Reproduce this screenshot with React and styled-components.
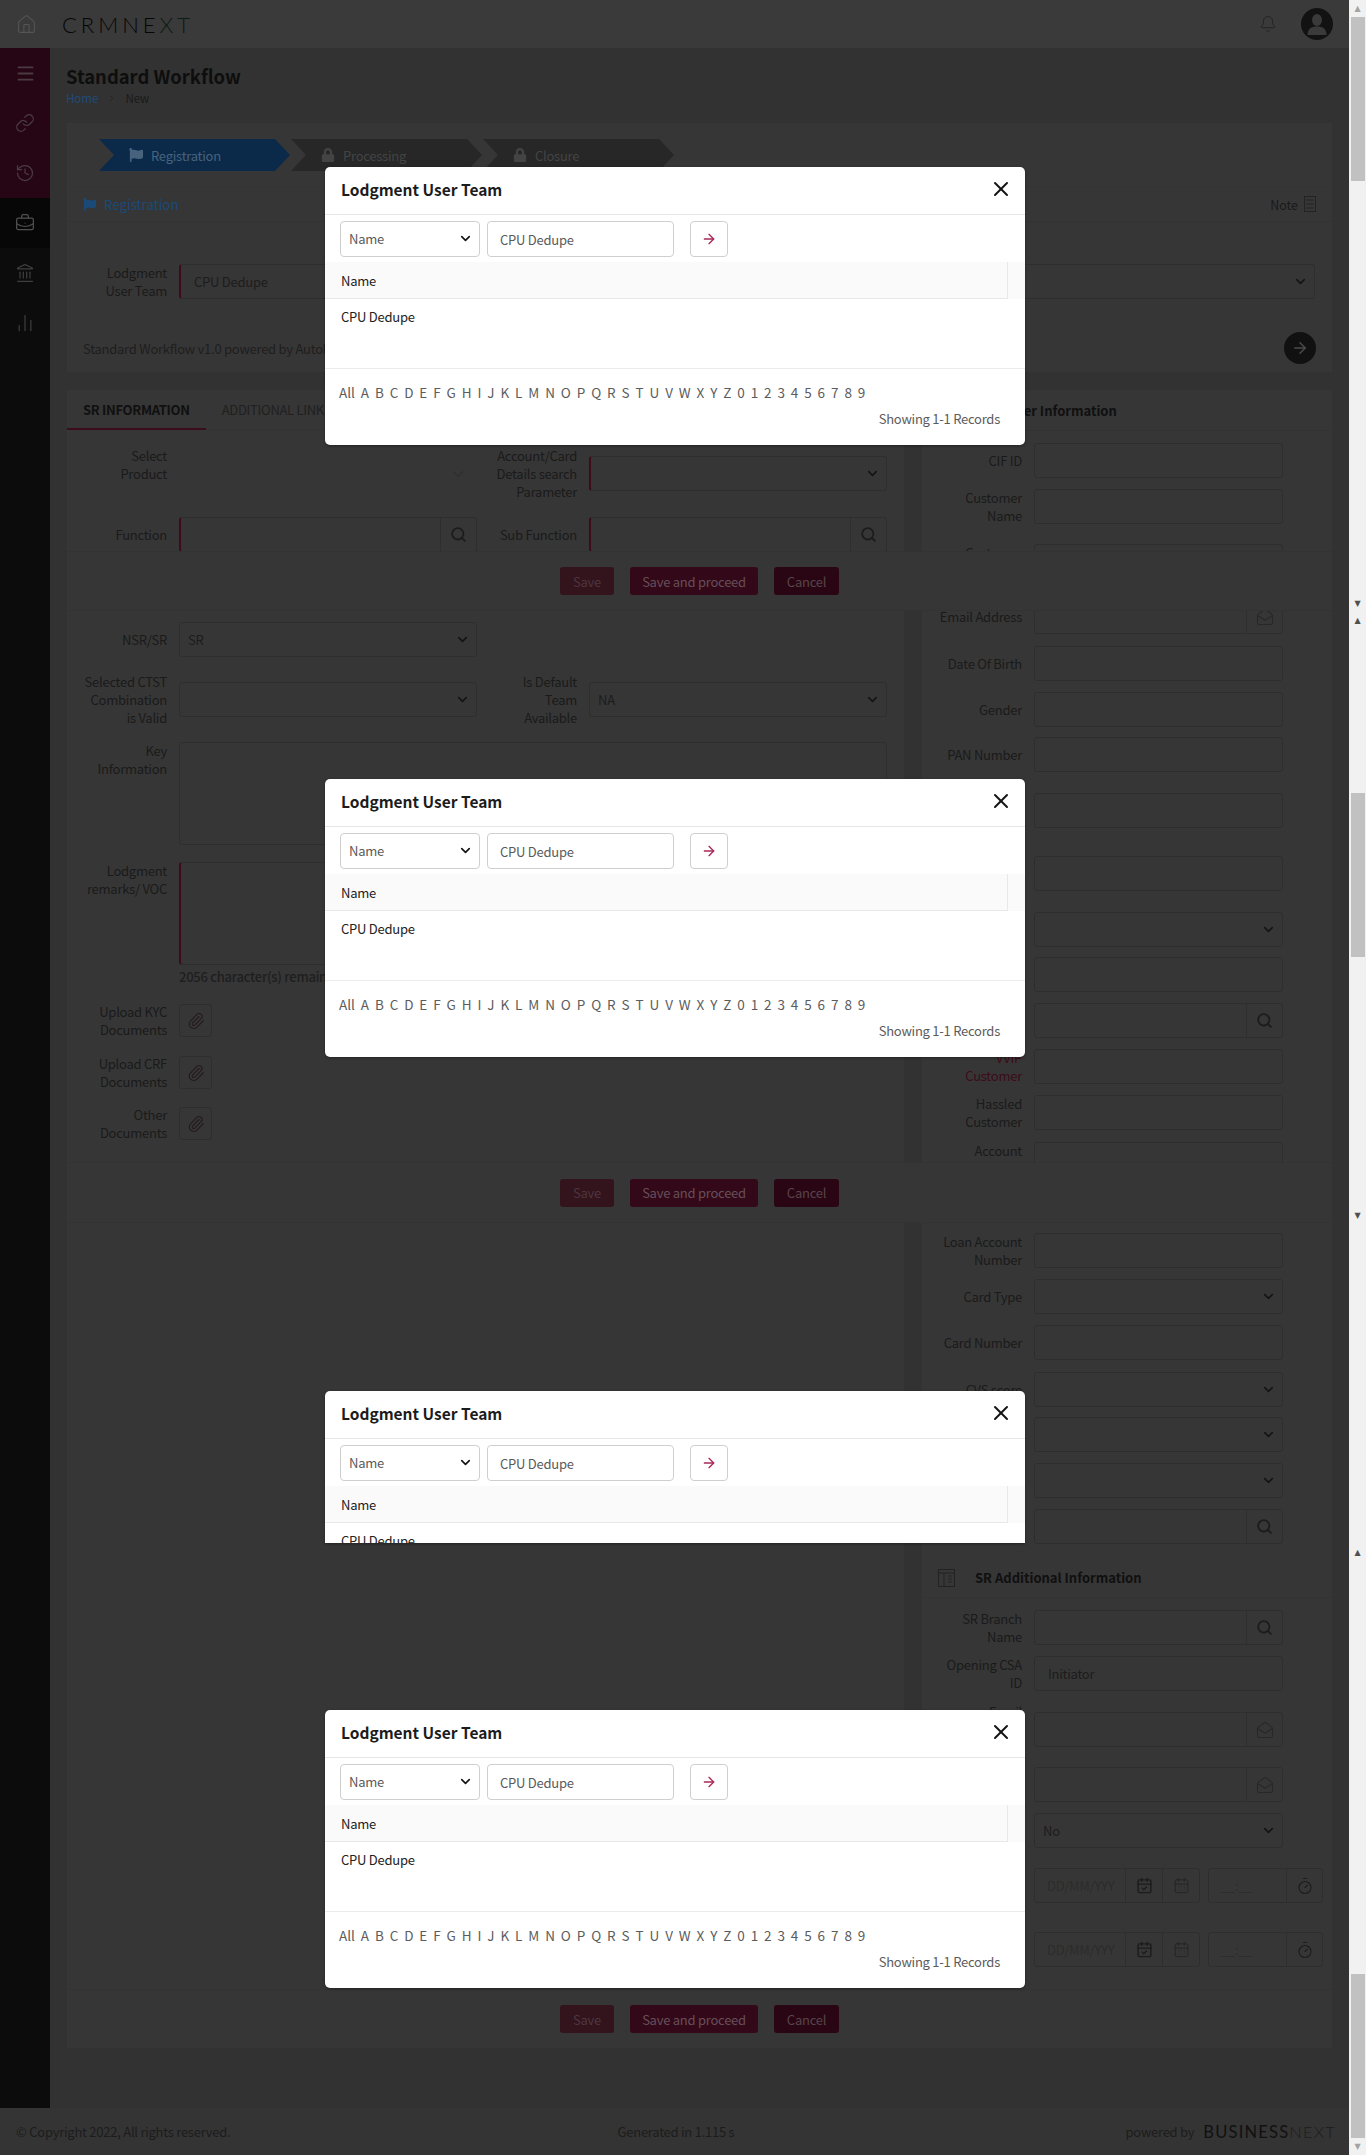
import React from 'react';
import styled, { createGlobalStyle } from 'styled-components';
import {
  House, Bell, Menu, Link, History, BriefcaseBusiness, Landmark, ChartNoAxesColumn,
  ChevronDown, ChevronRight, ArrowRight, X, Search, Paperclip, MailOpen, CalendarDays,
  CalendarCheck, Timer,
} from 'lucide-react';
import { FaFlag, FaLock } from 'react-icons/fa';

const FONT = '"Noto Sans CJK SC", "Noto Sans", sans-serif';

const GlobalStyle = createGlobalStyle`
  html, body { margin: 0; padding: 0; background: #323232; }
  * { box-sizing: border-box; }
  body { font-family: ${FONT}; font-size: 13px; letter-spacing: -0.25px; }
`;

const Shell = styled.div`
  position: relative;
  width: 1366px;
  height: 2155px;
  overflow: hidden;
  display: flex;
`;

const Page = styled.div`
  width: 1349px;
  display: flex;
  flex-direction: column;
  background: #323232;
`;

const TopBar = styled.header`
  height: 48px;
  display: flex;
  align-items: center;
  background: #3a3a3a;
  padding: 0 16px 0 16px;
  color: #1d1d1d;
`;

const Logo = styled.div`
  font-family: Lato, sans-serif;
  font-weight: 300;
  font-size: 22px;
  letter-spacing: 4px;
  margin-left: 25px;
  color: #060606;
  span { color: #0c1c12; }
`;

const TopRight = styled.div`
  margin-left: auto;
  display: flex;
  align-items: center;
  gap: 24px;
`;

const Body = styled.div`
  flex: 1;
  display: flex;
  min-height: 0;
`;

const Sidebar = styled.nav`
  width: 50px;
  background: #0c0c0c;
`;

const SideItem = styled.div`
  height: 50px;
  display: flex;
  align-items: center;
  justify-content: center;
  color: ${p => (p.$tone === 'crimson' ? '#4a3a41' : '#3e3e3e')};
  background: ${p => (p.$tone === 'crimson' ? '#260614' : p.$tone === 'active' ? '#070707' : 'transparent')};
`;

const Content = styled.main`
  flex: 1;
  padding: 0 17px;
  display: flex;
  flex-direction: column;
`;

const PageHead = styled.div`
  height: 75px;
  padding: 16px 0 0 0;
  margin-left: -1px;
`;

const PageTitle = styled.h1`
  margin: 0;
  font-size: 18.4px;
  line-height: 24px;
  font-weight: 600;
  letter-spacing: 0;
  color: #0e0e0e;
`;

const Crumbs = styled.div`
  margin-top: 2px;
  font-size: 11.5px;
  letter-spacing: 0;
  line-height: 16px;
  display: flex;
  align-items: center;
  gap: 8px;
  color: #1a1a1a;
  a { color: #1f4a78; }
`;

const TopCard = styled.section`
  background: #363636;
  height: 249px;
  margin-bottom: 18px;
`;

const Stepper = styled.div`
  height: 63px;
  padding: 16px 32px;
  display: flex;
  gap: 1px;
`;

const Step = styled.div`
  width: 191px;
  height: 32px;
  padding-left: 30px;
  display: flex;
  align-items: center;
  gap: 8px;
  clip-path: polygon(0 0, calc(100% - 15px) 0, 100% 50%, calc(100% - 15px) 100%, 0 100%, 15px 50%);
  background: ${p => (p.$active ? '#0b2a4a' : '#272727')};
  color: ${p => (p.$active ? '#47627d' : '#444')};
`;

const SubHead = styled.div`
  height: 36px;
  padding: 0 16px;
  display: flex;
  align-items: center;
  gap: 8px;
  border-top: 1px solid #343434;
  border-bottom: 1px solid #333;
  color: #1a4a78;
  font-size: 13.3px;
  letter-spacing: 0;
`;

const NoteLink = styled.div`
  margin-left: auto;
  display: flex;
  align-items: center;
  gap: 6px;
  color: #1a1a1a;
  font-size: 12.5px;
`;

const TeamRow = styled.div`
  margin-top: 42px;
  padding: 0 17px 0 16px;
`;

const PoweredRow = styled.div`
  margin-top: 33px;
  padding: 0 16px;
  height: 32px;
  display: flex;
  align-items: center;
  justify-content: space-between;
  color: #1e1e1e;
`;

const RoundNext = styled.div`
  width: 32px;
  height: 32px;
  border-radius: 50%;
  background: #111;
  color: #4b4b4b;
  display: flex;
  align-items: center;
  justify-content: center;
`;

const Slice = styled.div`
  height: ${p => p.$h}px;
  display: flex;
  gap: 18px;
  overflow: hidden;
`;

const LeftCol = styled.div`
  width: 837px;
  background: #363636;
`;

const RightCol = styled.div`
  width: 410px;
  padding: 0 9px 0 16px;
  background: #363636;
`;

const Tabs = styled.div`
  height: 40px;
  display: flex;
  border-bottom: 1px solid #333;
`;

const Tab = styled.div`
  padding: 0 16px;
  height: 40px;
  display: flex;
  align-items: center;
  font-weight: ${p => (p.$active ? 600 : 400)};
  letter-spacing: -0.3px;
  color: ${p => (p.$active ? '#101010' : '#202020')};
  border-bottom: 2px solid ${p => (p.$active ? '#3b0c1a' : 'transparent')};
`;

const FieldGrid = styled.div`
  display: grid;
  grid-template-columns: 1fr 1fr;
  column-gap: 16px;
  padding: 0 17px 0 16px;
  margin-top: ${p => p.$gap || 0}px;
`;

const Wide = styled.div`
  grid-column: 1 / 3;
`;

const FieldRow = styled.div`
  display: flex;
  gap: 12px;
  height: ${p => p.$h || 35}px;
  align-items: ${p => (p.$top ? 'flex-start' : 'center')};
  margin-top: ${p => p.$gap || 0}px;
  max-width: ${p => (p.$max ? `${p.$max}px` : 'none')};
`;

const FieldLabel = styled.div`
  width: 84px;
  flex-shrink: 0;
  text-align: right;
  line-height: 18px;
  margin-bottom: ${p => p.$lift || 0}px;
  color: ${p => (p.$red ? '#3e0b18' : '#1a1a1a')};
`;

const Control = styled.div`
  flex: 1;
  min-width: 0;
  height: 100%;
  display: flex;
  align-items: center;
  justify-content: ${p => (p.$plain ? 'flex-end' : 'flex-start')};
  border: ${p => (p.$plain ? 'none' : '1px solid #2e2e2e')};
  border-left: ${p => (p.$req ? '2px solid #3e0c18' : p.$plain ? 'none' : '1px solid #2e2e2e')};
  border-radius: 3px;
  color: #1c1c1c;
  padding-left: ${p => p.$pad || 8}px;
  padding-right: ${p => (p.$plain ? 9 : 0)}px;
`;

const Chevron = styled.span`
  margin-left: auto;
  width: 21px;
  display: flex;
  color: #141414;
`;

const Addon = styled.span`
  margin-left: auto;
  width: ${p => p.$w || 36}px;
  height: 100%;
  flex-shrink: 0;
  display: flex;
  align-items: center;
  justify-content: center;
  border-left: 1px solid #2e2e2e;
  color: ${p => p.$tone || '#1c1c1c'};
  & + & { margin-left: 0; }
`;

const Hint = styled.div`
  margin: 3px 0 0 96px;
  line-height: 18px;
  font-weight: 500;
  color: #1e1e1e;
`;

const AttachBtn = styled.div`
  width: 33px;
  height: 33px;
  border: 1px solid #2e2e2e;
  border-radius: 3px;
  display: flex;
  align-items: center;
  justify-content: center;
  color: #251a1e;
`;

const DatePair = styled.div`
  flex: 1;
  height: 100%;
  display: flex;
  gap: 8px;
`;

const DateBox = styled.div`
  width: ${p => p.$w}px;
  height: 100%;
  display: flex;
  align-items: center;
  border: 1px solid #2e2e2e;
  border-radius: 3px;
  padding-left: 12px;
  color: #2c2c2c;
`;

const ColHead = styled.div`
  height: ${p => p.$h}px;
  margin: ${p => p.$gap || 0}px -9px 0 -16px;
  padding-left: 16px;
  display: flex;
  align-items: center;
  gap: 20px;
  font-size: 13px;
  letter-spacing: 0;
  font-weight: 600;
  color: #101010;
  border-bottom: 1px solid #333;
`;

const ActionBar = styled.div`
  height: ${p => p.$h || 60}px;
  flex-shrink: 0;
  background: #363636;
  border-top: 1px solid #333;
  border-bottom: 1px solid #333;
  display: flex;
  align-items: center;
  justify-content: center;
  gap: 16px;
`;

const ActionBtn = styled.div`
  height: 28px;
  width: ${p => p.$w}px;
  border-radius: 3px;
  display: flex;
  align-items: center;
  justify-content: center;
  background: ${p => p.$bg};
  color: ${p => p.$fg};
`;

const PageFooter = styled.footer`
  height: 47px;
  padding: 0 13px 0 16px;
  background: #343434;
  display: grid;
  grid-template-columns: 1fr auto 1fr;
  align-items: center;
  color: #1c1c1c;
`;

const PoweredBy = styled.div`
  justify-self: end;
  display: flex;
  align-items: center;
  gap: 9px;
`;

const BrandMark = styled.span`
  font-family: Lato, sans-serif;
  font-size: 16.5px;
  letter-spacing: 1.2px;
  color: #111;
  font-weight: 400;
  span { color: #1c1c1c; font-weight: 300; }
`;

const Scrollbar = styled.aside`
  width: 17px;
  background: #f1f1f1;
  display: flex;
  flex-direction: column;
`;

const ScrollSeg = styled.div`
  height: ${p => p.$h}px;
  display: flex;
  flex-direction: column;
  align-items: center;
`;

const ScrollArrow = styled.div`
  height: 17px;
  flex-shrink: 0;
  margin-top: ${p => (p.$end ? 'auto' : 0)};
  color: ${p => (p.$dim ? '#a3a3a3' : '#505050')};
  font-size: 8px;
  line-height: 17px;
  font-family: "DejaVu Sans", sans-serif;
`;

const ScrollThumb = styled.div`
  width: 14px;
  height: ${p => p.$h}px;
  margin-top: ${p => p.$at}px;
  background: #c1c1c1;
`;

// the four popups of the stitched capture
const Modal = styled.div`
  position: absolute;
  left: 325px;
  top: ${p => p.$top}px;
  width: 700px;
  height: ${p => p.$h || 278}px;
  overflow: hidden;
  background: #fff;
  border-radius: ${p => (p.$clipped ? '5px 5px 0 0' : '5px')};
  box-shadow: 0 1px 3px rgba(0, 0, 0, 0.35);
`;

const ModalHead = styled.div`
  height: 48px;
  padding: 0 16px 3px;
  display: flex;
  align-items: center;
  justify-content: space-between;
  border-bottom: 1px solid #e6e6e6;
`;

const ModalTitle = styled.h2`
  margin: 0;
  font-size: 15.5px;
  line-height: 24px;
  font-weight: 600;
  letter-spacing: 0;
  color: #1c1c1c;
`;

const CloseBtn = styled.span`
  display: flex;
  color: #141414;
  margin-right: -4px;
`;

const FilterRow = styled.div`
  padding: 6px 0 5px 15px;
  display: flex;
`;

const FilterBox = styled.div`
  width: ${p => p.$w}px;
  height: 36px;
  margin-right: ${p => p.$mr || 0}px;
  border: 1px solid #cfcfcf;
  border-radius: 4px;
  padding-left: ${p => p.$pad || 0}px;
  padding-bottom: ${p => p.$lift || 0}px;
  display: flex;
  align-items: center;
  justify-content: ${p => (p.$center ? 'center' : 'flex-start')};
  color: #5a5a5a;
`;

const TableHead = styled.div`
  height: 37px;
  background: #fafafa;
`;

const HeadCell = styled.div`
  width: 683px;
  height: 37px;
  padding-left: 16px;
  display: flex;
  align-items: center;
  color: #222;
  border-right: 1px solid #e8e8e8;
  border-bottom: 1px solid #e8e8e8;
`;

const TableBody = styled.div`
  height: 70px;
  padding: 8px 16px;
  line-height: 20px;
  color: #222;
  border-bottom: 1px solid #ececec;
`;

const Alpha = styled.div`
  padding: 13px 0 0 14px;
  display: flex;
  gap: 5.9px;
  line-height: 20px;
  font-size: 13.5px;
  letter-spacing: 0;
  color: #5c5c5c;
`;

const Records = styled.div`
  margin-top: 7px;
  padding-right: 25px;
  text-align: right;
  line-height: 20px;
  color: #5c5c5c;
`;

const ALPHA = ['All', ...'ABCDEFGHIJKLMNOPQRSTUVWXYZ0123456789'];

function LookupModal({ top, height, clipped }) {
  return (
    <Modal $top={top} $h={height} $clipped={clipped}>
      <ModalHead>
        <ModalTitle>Lodgment User Team</ModalTitle>
        <CloseBtn><X size={24} strokeWidth={2} /></CloseBtn>
      </ModalHead>
      <FilterRow>
        <FilterBox $w={140} $mr={7} $pad={8} $lift={2}>
          Name
          <Chevron><ChevronDown size={15} strokeWidth={2.6} /></Chevron>
        </FilterBox>
        <FilterBox $w={187} $mr={16} $pad={12}>CPU Dedupe</FilterBox>
        <FilterBox $w={38} $center><ArrowRight size={16} color="#a8285a" /></FilterBox>
      </FilterRow>
      <TableHead><HeadCell>Name</HeadCell></TableHead>
      <TableBody>CPU Dedupe</TableBody>
      <Alpha>{ALPHA.map(c => <span key={c}>{c}</span>)}</Alpha>
      <Records>Showing 1-1 Records</Records>
    </Modal>
  );
}

function SelectControl({ value, req, pad }) {
  return (
    <Control $req={req} $pad={pad}>
      {value}
      <Chevron><ChevronDown size={15} strokeWidth={2.6} /></Chevron>
    </Control>
  );
}

function LookupControl({ req, icon }) {
  const Icon = icon || Search;
  return (
    <Control $req={req}>
      <Addon>
        {icon ? <Icon size={18} strokeWidth={1.4} color="#272727" /> : <Icon size={17} strokeWidth={2.6} />}
      </Addon>
    </Control>
  );
}

function Field({ label, gap, red, max, lift, children }) {
  return (
    <FieldRow $gap={gap} $max={max}>
      <FieldLabel $red={red} $lift={lift}>{label}</FieldLabel>
      {children}
    </FieldRow>
  );
}

function SideField({ label, gap, red, type }) {
  return (
    <Field label={label} gap={gap} red={red} max={345}>
      {type === 'select' && <SelectControl />}
      {type === 'search' && <LookupControl />}
      {type === 'mail' && <LookupControl icon={MailOpen} />}
      {!type && <Control />}
    </Field>
  );
}

function Actions({ h }) {
  return (
    <ActionBar $h={h}>
      <ActionBtn $w={54} $bg="#33131c" $fg="#4e363f">Save</ActionBtn>
      <ActionBtn $w={128} $bg="#330818" $fg="#664f58">Save and proceed</ActionBtn>
      <ActionBtn $w={65} $bg="#2a0614" $fg="#57444a">Cancel</ActionBtn>
    </ActionBar>
  );
}

function DateTimeField({ gap, label }) {
  return (
    <Field label={label} gap={gap}>
      <DatePair>
        <DateBox $w={166}>
          DD/MM/YYY
          <Addon $w={37}><CalendarCheck size={17} /></Addon>
          <Addon $w={37} $tone="#242424"><CalendarDays size={17} strokeWidth={1.3} /></Addon>
        </DateBox>
        <DateBox $w={115}>
          __:__
          <Addon $w={36}><Timer size={18} strokeWidth={1.5} /></Addon>
        </DateBox>
      </DatePair>
    </Field>
  );
}

function TableIcon() {
  return (
    <svg width="17" height="18" viewBox="0 0 17 18" fill="none" stroke="#222" strokeWidth="1">
      <rect x="0.5" y="0.5" width="16" height="17" />
      <path d="M0.5 4h16M6 4v13.500M10 7h4M10 10h4M10 13h4" />
    </svg>
  );
}

function NoteIcon() {
  return (
    <svg width="12" height="16" viewBox="0 0 12 16" fill="none" stroke="#232323" strokeWidth="1">
      <rect x="0.5" y="0.5" width="11" height="15" />
      <path d="M2.500 4h7M2.500 8h7M2.500 12h7" />
    </svg>
  );
}

function Avatar() {
  return (
    <svg width="32" height="32" viewBox="0 0 32 32">
      <circle cx="16" cy="16" r="16" fill="#121212" />
      <ellipse cx="16" cy="12" rx="5" ry="6" fill="#3a3a3a" />
      <path d="M6.500 27c0-6 3.500-8.500 9.500-8.500s9.500 2.500 9.500 8.500z" fill="#3a3a3a" />
    </svg>
  );
}

export default function App() {
  return (
    <Shell>
      <GlobalStyle />
      <Page>
        <TopBar>
          <House size={21} strokeWidth={1.2} color="#555" />
          <Logo>CRMNE<span>XT</span></Logo>
          <TopRight>
            <Bell size={18} strokeWidth={1.2} color="#202020" />
            <Avatar />
          </TopRight>
        </TopBar>
        <Body>
          <Sidebar>
            <SideItem $tone="crimson"><Menu size={21} strokeWidth={2.2} /></SideItem>
            <SideItem $tone="crimson"><Link size={20} strokeWidth={1.5} /></SideItem>
            <SideItem $tone="crimson"><History size={20} strokeWidth={1.5} /></SideItem>
            <SideItem $tone="active"><BriefcaseBusiness size={20} strokeWidth={1.5} color="#505050" /></SideItem>
            <SideItem><Landmark size={20} strokeWidth={1.5} /></SideItem>
            <SideItem><ChartNoAxesColumn size={20} strokeWidth={1.5} /></SideItem>
          </Sidebar>
          <Content>
            <PageHead>
              <PageTitle>Standard Workflow</PageTitle>
              <Crumbs><a>Home</a><ChevronRight size={11} color="#222" />New</Crumbs>
            </PageHead>

            <TopCard>
              <Stepper>
                <Step $active><FaFlag size={14} />Registration</Step>
                <Step><FaLock size={14} />Processing</Step>
                <Step><FaLock size={14} />Closure</Step>
              </Stepper>
              <SubHead>
                <FaFlag size={13} />Registration
                <NoteLink>Note <NoteIcon /></NoteLink>
              </SubHead>
              <TeamRow>
                <Field label="Lodgment User Team"><SelectControl value="CPU Dedupe" req pad={13} /></Field>
              </TeamRow>
              <PoweredRow>
                Standard Workflow v1.0 powered by AutoFlow
                <RoundNext><ArrowRight size={18} /></RoundNext>
              </PoweredRow>
            </TopCard>

            <Slice $h={161}>
              <LeftCol>
                <Tabs>
                  <Tab $active>SR INFORMATION</Tab>
                  <Tab>ADDITIONAL LINKS</Tab>
                </Tabs>
                <FieldGrid $gap={26}>
                  <Field label="Select Product" lift={17}>
                    <Control $plain><ChevronDown size={20} strokeWidth={0.8} color="#222" /></Control>
                  </Field>
                  <Field label="Account/Card Details search Parameter"><SelectControl req /></Field>
                </FieldGrid>
                <FieldGrid $gap={26}>
                  <Field label="Function"><LookupControl req /></Field>
                  <Field label="Sub Function"><LookupControl req /></Field>
                </FieldGrid>
              </LeftCol>
              <RightCol>
                <ColHead $h={41}><TableIcon />Customer Information</ColHead>
                <SideField label="CIF ID" gap={12} />
                <SideField label="Customer Name" gap={11} />
                <SideField label="Customer Type" gap={20} />
              </RightCol>
            </Slice>
            <Actions />

            <Slice $h={551}>
              <LeftCol>
                <FieldGrid $gap={11}>
                  <Field label="NSR/SR"><SelectControl value="SR" /></Field>
                </FieldGrid>
                <FieldGrid $gap={25}>
                  <Field label="Selected CTST Combination is Valid"><SelectControl /></Field>
                  <Field label="Is Default Team Available"><SelectControl value="NA" /></Field>
                </FieldGrid>
                <FieldGrid $gap={25}>
                  <Wide>
                    <FieldRow $h={103} $top>
                      <FieldLabel>Key Information</FieldLabel>
                      <Control />
                    </FieldRow>
                  </Wide>
                </FieldGrid>
                <FieldGrid $gap={17}>
                  <Wide>
                    <FieldRow $h={103} $top>
                      <FieldLabel>Lodgment remarks/ VOC</FieldLabel>
                      <Control $req />
                    </FieldRow>
                    <Hint>2056 character(s) remaining</Hint>
                  </Wide>
                </FieldGrid>
                <FieldGrid $gap={18}>
                  <FieldRow $h={33}>
                    <FieldLabel>Upload KYC Documents</FieldLabel>
                    <AttachBtn><Paperclip size={18} strokeWidth={1.5} /></AttachBtn>
                  </FieldRow>
                </FieldGrid>
                <FieldGrid $gap={19}>
                  <FieldRow $h={33}>
                    <FieldLabel>Upload CRF Documents</FieldLabel>
                    <AttachBtn><Paperclip size={18} strokeWidth={1.5} /></AttachBtn>
                  </FieldRow>
                </FieldGrid>
                <FieldGrid $gap={18}>
                  <FieldRow $h={33}>
                    <FieldLabel>Other Documents</FieldLabel>
                    <AttachBtn><Paperclip size={18} strokeWidth={1.5} /></AttachBtn>
                  </FieldRow>
                </FieldGrid>
              </LeftCol>
              <RightCol>
                <SideField label="Email Address" gap={-12} type="mail" />
                <SideField label="Date Of Birth" gap={12} />
                <SideField label="Gender" gap={11} />
                <SideField label="PAN Number" gap={10} />
                <SideField label="Mobile Number" gap={21} />
                <SideField label="Alternate Number" gap={28} />
                <SideField label="Segment" gap={21} type="select" />
                <SideField label="Relationship" gap={10} />
                <SideField label="Branch" gap={11} type="search" />
                <SideField label="VVIP Customer" gap={11} red />
                <SideField label="Hassled Customer" gap={11} />
                <SideField label="Account Number" gap={12} />
              </RightCol>
            </Slice>
            <Actions h={61} />

            <Slice $h={766}>
              <LeftCol />
              <RightCol>
                <SideField label="Loan Account Number" gap={10} />
                <SideField label="Card Type" gap={11} type="select" />
                <SideField label="Card Number" gap={11} />
                <SideField label="CVS score" gap={12} type="select" />
                <SideField label="Sentiment" gap={10} type="select" />
                <SideField label="Language" gap={11} type="select" />
                <SideField label="Home Branch" gap={11} type="search" />
                <ColHead $h={40} $gap={14}><TableIcon />SR Additional Information</ColHead>
                <SideField label="SR Branch Name" gap={12} type="search" />
                <Field label="Opening CSA ID" gap={11} max={345}><Control $pad={13}>Initiator</Control></Field>
                <SideField label="Email Escalation Address" gap={21} type="mail" />
                <SideField label="Alternate Email Address" gap={20} type="mail" />
                <Field label="Repeat Complaint" gap={11} max={345}><SelectControl value="No" /></Field>
                <DateTimeField label="Opening Date" gap={20} />
                <DateTimeField label="Closure Date" gap={29} />
              </RightCol>
            </Slice>
            <Actions />
          </Content>
        </Body>
        <PageFooter>
          <span>© Copyright 2022, All rights reserved.</span>
          <span>Generated in 1.115 s</span>
          <PoweredBy>powered by <BrandMark>BUSINESS<span>NEXT</span></BrandMark></PoweredBy>
        </PageFooter>
      </Page>

      <Scrollbar>
        <ScrollSeg $h={612}>
          <ScrollArrow $dim>▲</ScrollArrow>
          <ScrollThumb $at={0} $h={164} />
          <ScrollArrow $end>▼</ScrollArrow>
        </ScrollSeg>
        <ScrollSeg $h={612}>
          <ScrollArrow>▲</ScrollArrow>
          <ScrollThumb $at={164} $h={164} />
          <ScrollArrow $end>▼</ScrollArrow>
        </ScrollSeg>
        <ScrollSeg $h={320} />
        <ScrollSeg $h={611}>
          <ScrollArrow>▲</ScrollArrow>
          <ScrollThumb $at={413} $h={166} />
          <ScrollArrow $end $dim>▼</ScrollArrow>
        </ScrollSeg>
      </Scrollbar>

      <LookupModal top={167} />
      <LookupModal top={779} />
      <LookupModal top={1391} height={152} clipped />
      <LookupModal top={1710} />
    </Shell>
  );
}
